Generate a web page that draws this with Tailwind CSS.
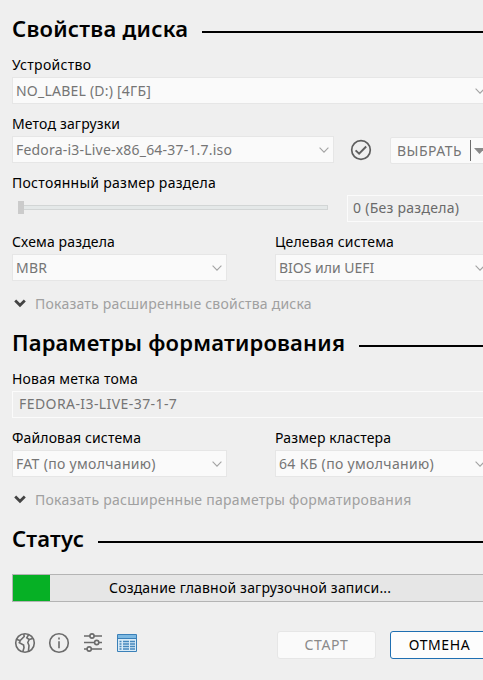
<!DOCTYPE html>
<html lang="ru">
<head>
<meta charset="utf-8">
<title>Rufus</title>
<script src="https://cdn.jsdelivr.net/npm/@tailwindcss/browser@4"></script>
</head>
<body class="w-[483px] h-[680px] overflow-hidden bg-[#efefef] font-['Noto_Sans','Liberation_Sans',sans-serif] text-sm leading-none text-black whitespace-nowrap">
<svg class="hidden">
  <symbol id="chev" viewBox="0 0 10 6"><path d="M.6.7 5 5.1 9.4.7" fill="none" stroke="#a3a3a3" stroke-width="1.1"/></symbol>
  <symbol id="bold" viewBox="0 0 12 9"><path d="M1.2 1.5 6 6.2l4.800-4.700" fill="none" stroke="#444" stroke-width="2.8"/></symbol>
</svg>
<main class="w-[495px] h-full pl-3 pt-[14px] flex flex-col">
  <div class="h-8 flex items-center gap-[14px] shrink-0">
    <h2 class="text-[22px] font-semibold tracking-[0.25px] w-[176px] pb-[4px]">Свойства диска</h2>
    <div class="grow h-[2px] bg-black relative top-[2px]"></div>
  </div>
  <div class="h-[23px] mt-2 pb-[2px] flex items-center shrink-0 tracking-[0.3px]">Устройство</div>
  <div class="h-[27px] w-[479px] bg-[#fafafa] border border-[#e6e6e6] flex items-center justify-between pl-[3px] pr-[5px] text-[#757575] shrink-0">
    <span class="tracking-[0.22px]">NO_LABEL (D:) [4ГБ]</span><svg class="w-[10px] h-[6px]"><use href="#chev"/></svg>
  </div>

  <div class="h-[23px] mt-[9px] pb-[2px] flex items-center shrink-0 tracking-[0.16px]">Метод загрузки</div>
  <div class="flex items-start shrink-0 h-[27px]">
    <div class="h-[27px] w-[322px] bg-[#fafafa] border border-[#e6e6e6] flex items-center justify-between pl-[3px] pr-1 text-[#757575]">
      <span class="tracking-[0.2px]">Fedora-i3-Live-x86_64-37-1.7.iso</span><svg class="w-[10px] h-[6px]"><use href="#chev"/></svg>
    </div>
    <svg class="w-[22px] h-[22px] ml-4 mt-[3px]" viewBox="0 0 22 22" fill="none" stroke="#5e5e5e"><circle cx="11" cy="11" r="9.3" stroke-width="1.7"/><path d="m5.6 11.4 3.5 3.3 7.1-7.2" stroke-width="1.9"/></svg>
    <div class="ml-[18px] mt-px h-[27px] w-[101px] bg-[#fafafa] border border-[#e6e6e6] rounded-[2px] flex items-center pl-[6px] text-[#757575]">
      <span class="tracking-[0.49px] w-[73px]">ВЫБРАТЬ</span>
      <span class="w-px h-[21px] bg-[#6c6c6c]"></span>
      <svg class="w-[11px] h-[6px] ml-[3px]" viewBox="0 0 11 6"><path d="M0 0h11L5.5 6z" fill="#8a8a8a"/></svg>
    </div>
  </div>

  <div class="h-[23px] mt-[9px] pb-[2px] flex items-center shrink-0 tracking-[0.27px]">Постоянный размер раздела</div>
  <div class="flex items-center shrink-0 h-[27px]">
    <div class="ml-[6px] mb-[2px] w-[6px] h-[13px] bg-[#cbcbcb]"></div>
    <div class="w-[304px] mb-[2px] h-[5px] bg-[#e4e8e8] border border-l-0 border-[#d2d5d5]"></div>
    <div class="ml-[19px] h-[27px] w-[137px] border border-[#fbfbfb] flex items-center pl-[5px] pb-[2px] text-[#6a6a6a] tracking-[0.27px]">0 (Без раздела)</div>
  </div>

  <div class="h-[23px] mt-[9px] pb-[2px] flex items-center shrink-0">
    <span class="w-[263px] tracking-[0.15px]">Схема раздела</span><span class="tracking-[0.17px]">Целевая система</span>
  </div>
  <div class="flex shrink-0 h-[27px] gap-12 text-[#757575]">
    <div class="w-[215px] bg-[#fafafa] border border-[#e6e6e6] flex items-center justify-between pl-[3px] pr-1"><span class="tracking-[0.2px]">MBR</span><svg class="w-[10px] h-[6px]"><use href="#chev"/></svg></div>
    <div class="w-[216px] bg-[#fafafa] border border-[#e6e6e6] flex items-center justify-between pl-[3px] pr-[5px]"><span class="tracking-[-0.02px]">BIOS или UEFI</span><svg class="w-[10px] h-[6px]"><use href="#chev"/></svg></div>
  </div>
  <div class="h-[22px] mt-3 ml-[2px] flex items-center gap-[9px] shrink-0 text-[#a0a0a0]">
    <svg class="w-3 h-[9px] mb-[2px]"><use href="#bold"/></svg><span class="tracking-[0.22px]">Показать расширенные свойства диска</span>
  </div>

  <div class="h-8 mt-[13px] flex items-center gap-[14px] shrink-0">
    <h2 class="text-[22px] font-semibold tracking-[0.19px] w-[333px] pb-[4px]">Параметры форматирования</h2>
    <div class="grow h-[2px] bg-black relative top-[2px]"></div>
  </div>
  <div class="h-[23px] mt-2 pb-[2px] flex items-center shrink-0 tracking-[0.2px]">Новая метка тома</div>
  <div class="h-[27px] w-[479px] border border-[#fbfbfb] flex items-center pl-[6px] pb-[2px] text-[#757575] shrink-0 tracking-[0.42px]">FEDORA-I3-LIVE-37-1-7</div>

  <div class="h-[23px] mt-[9px] pb-[2px] flex items-center shrink-0">
    <span class="w-[263px] tracking-[0.13px]">Файловая система</span><span class="tracking-[0.14px]">Размер кластера</span>
  </div>
  <div class="flex shrink-0 h-[27px] gap-12 text-[#757575]">
    <div class="w-[215px] bg-[#fafafa] border border-[#e6e6e6] flex items-center justify-between pl-[3px] pr-1"><span class="tracking-[0.32px]">FAT (по умолчанию)</span><svg class="w-[10px] h-[6px]"><use href="#chev"/></svg></div>
    <div class="w-[216px] bg-[#fafafa] border border-[#e6e6e6] flex items-center justify-between pl-[3px] pr-[5px]"><span class="tracking-[0.33px]">64 КБ (по умолчанию)</span><svg class="w-[10px] h-[6px]"><use href="#chev"/></svg></div>
  </div>
  <div class="h-[22px] mt-3 ml-[2px] flex items-center gap-[9px] shrink-0 text-[#a0a0a0]">
    <svg class="w-3 h-[9px] mb-[2px]"><use href="#bold"/></svg><span class="tracking-[0.27px]">Показать расширенные параметры форматирования</span>
  </div>

  <div class="h-8 mt-[13px] flex items-center gap-[14px] shrink-0">
    <h2 class="text-[22px] font-semibold tracking-[0.2px] w-[72px] pb-[4px]">Статус</h2>
    <div class="grow h-[2px] bg-black relative top-[2px]"></div>
  </div>
  <div class="h-7 w-[479px] mt-[18px] bg-[#e6e6e6] border border-[#b4b4b4] flex items-center shrink-0">
    <div class="h-full w-[37px] bg-[#06b025]"></div><span class="ml-[59px] tracking-[0.19px]">Создание главной загрузочной записи...</span>
  </div>

  <div class="h-7 mt-[29px] flex shrink-0">
    <div class="flex pl-[2px] pt-px gap-3 w-[265px]">
      <svg class="w-[22px] h-[22px]" viewBox="0 0 22 22" fill="none" stroke="#6b6b6b" stroke-width="1.6"><circle cx="11" cy="11" r="9.3"/><path d="M9.800 2.200 10.200 4.500 6.500 8.200 5.300 10.600 9.600 13 10 15.800 8.800 19.800M2.800 7.500l3.200 1M14.600 2.600 12.800 5.800l2.400 1.700-1.400 3 1.200 3-.6 6M15.200 7.500l3.400-1"/></svg>
      <svg class="w-[22px] h-[22px]" viewBox="0 0 22 22" fill="none" stroke="#6b6b6b" stroke-width="1.6"><circle cx="11" cy="11" r="9.3"/><path d="M11 9.3v7M11 5.6v1.9"/></svg>
      <svg class="w-[22px] h-[22px]" viewBox="0 0 22 22" fill="none" stroke="#6b6b6b" stroke-width="1.6"><path d="M2 4h6m4 0h8M2 10.500h10.500m4.500 0h3M2 17h3m4.500 0H20"/><circle cx="10" cy="4" r="2.100"/><circle cx="14.700" cy="10.500" r="2.100"/><circle cx="7.200" cy="17" r="2.100"/></svg>
      <svg class="w-[22px] h-[22px]" viewBox="0 0 22 22"><path d="M1.500 2.500h19v17h-19z" fill="#d9ebf7" stroke="#3a80b8"/><path d="M2 3h18v3H2z" fill="#7db9e2"/><path d="M1 6.500h20" stroke="#3a80b8"/><path d="M3.500 9.500h2m-2 2.500h2m-2 2.500h2m-2 2.500h2M7 9.500h6m1 0h5M7 12h6m1 0h5m-12 2.500h6m1 0h5m-12 2.500h6m1 0h5" stroke="#4688bd" stroke-width="1.400"/></svg>
    </div>
    <div class="w-[99px] h-7 bg-[#fafafa] border border-[#e6e6e6] rounded-[3px] flex items-center justify-center text-[#8a8a8a] tracking-[0.61px]">СТАРТ</div>
    <div class="ml-[14px] w-[99px] h-7 bg-[#fdfdfd] border border-[#1f6fb2] rounded-[3px] flex items-center justify-center tracking-[0.6px]">ОТМЕНА</div>
  </div>
</main>
</body>
</html>
